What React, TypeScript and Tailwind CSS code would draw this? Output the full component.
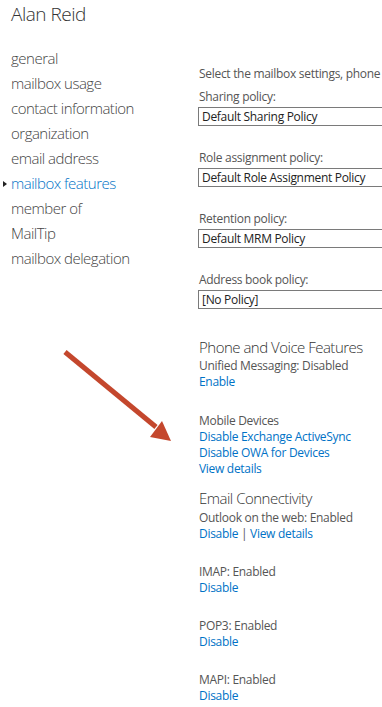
const nav = [
  'general',
  'mailbox usage',
  'contact information',
  'organization',
  'email address',
  'mailbox features',
  'member of',
  'MailTip',
  'mailbox delegation',
]

const policies = [
  { label: 'Sharing policy:', value: 'Default Sharing Policy' },
  { label: 'Role assignment policy:', value: 'Default Role Assignment Policy' },
  { label: 'Retention policy:', value: 'Default MRM Policy' },
  { label: 'Address book policy:', value: '[No Policy]' },
]

const protocols = ['IMAP', 'POP3', 'MAPI']

const Link = ({ children }: { children: React.ReactNode }) => (
  <span className="text-[#0072c6] cursor-pointer">{children}</span>
)

export default function App() {
  return (
    <div className="relative w-[382px] h-[707px] overflow-hidden bg-white text-[#555] font-['Open_Sans',sans-serif]">
      <div className="flex">
        {/* left nav */}
        <div className="w-[198px] shrink-0 pl-[11px]">
          <div className="h-[28px] leading-[28px] text-[19px] font-light tracking-[-0.5px] text-[#333]">Alan Reid</div>
          <ul className="mt-[18px]">
            {nav.map((item) => {
              const active = item === 'mailbox features'
              return (
                <li
                  key={item}
                  className={`relative h-[25px] leading-[25px] text-[15px] font-light tracking-[-0.5px] ${active ? 'text-[#0072c6]' : 'text-[#444]'}`}
                >
                  {active && (
                    <span className="absolute left-[-8px] top-[10px] w-0 h-0 border-y-[3.5px] border-y-transparent border-l-[4px] border-l-[#222]" />
                  )}
                  {item}
                </li>
              )
            })}
          </ul>
        </div>

        {/* right pane */}
        <div className="flex-1 min-w-0 text-[12px] leading-[16px] tracking-[-0.3px]">
          <div className="mt-[66px] pl-[1px] whitespace-nowrap">Select the mailbox settings, phone</div>
          <div className="mt-[7px] flex flex-col gap-[24px]">
            {policies.map((p) => (
              <div key={p.label}>
                <div className="pl-[1px] whitespace-nowrap">{p.label}</div>
                <div className="mt-[2px] w-[220px] h-[19px] border border-[#7a7a7a] pl-[3px] leading-[17px] text-[#222] whitespace-nowrap">
                  {p.value}
                </div>
              </div>
            ))}
          </div>

          <div className="pl-[1px]">
            <div className="mt-[28px] h-[20px] leading-[20px] text-[15px] font-light tracking-[-0.5px] text-[#333] whitespace-nowrap">Phone and Voice Features</div>
            <div className="mt-[1px] whitespace-nowrap">Unified Messaging: Disabled</div>
            <div><Link>Enable</Link></div>

            <div className="mt-[23px]">Mobile Devices</div>
            <div className="whitespace-nowrap"><Link>Disable Exchange ActiveSync</Link></div>
            <div className="whitespace-nowrap"><Link>Disable OWA for Devices</Link></div>
            <div><Link>View details</Link></div>

            <div className="mt-[11px] h-[20px] leading-[20px] text-[15px] font-light tracking-[-0.5px] text-[#333] whitespace-nowrap">Email Connectivity</div>
            <div className="mt-[2px] whitespace-nowrap">Outlook on the web: Enabled</div>
            <div className="whitespace-nowrap">
              <Link>Disable</Link> <span className="text-[#555]">|</span> <Link>View details</Link>
            </div>

            {protocols.map((p) => (
              <div key={p} className="mt-[22px]">
                <div>{p}: Enabled</div>
                <div><Link>Disable</Link></div>
              </div>
            ))}
          </div>
        </div>
      </div>

      {/* red callout arrow */}
      <svg className="absolute left-0 top-0 pointer-events-none" width="382" height="707">
        <line x1="65" y1="352" x2="156" y2="427" stroke="#c4472d" strokeWidth="5" />
        <polygon points="171,441 150,437 162,421" fill="#c4472d" />
      </svg>
    </div>
  )
}
